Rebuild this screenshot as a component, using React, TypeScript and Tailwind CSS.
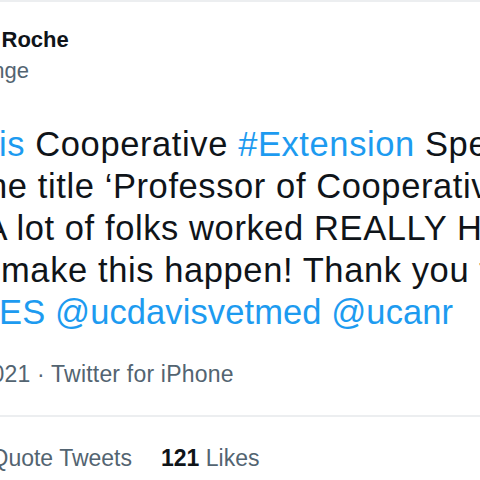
export default function App() {
  const font = "font-['Liberation_Sans','Helvetica_Neue',Arial,sans-serif]";
  const blue = "text-[#1d9bf0]";
  return (
    <div className={`w-[480px] h-[480px] overflow-hidden bg-white border-t-2 border-[#eceef0] ${font}`}>
      <div className="whitespace-nowrap">
        <div className="pt-[23px] text-[22px] leading-[30px] font-bold text-[#0f1419] ml-[1.5px]">Roche</div>
        <div className="mt-[1px] text-[22px] leading-[30px] text-[#536471] ml-[-7.7px]">nge</div>

        <div className="mt-[37px] text-[34.5px] leading-[42px] tracking-[0.6px] text-[#0f1419]">
          <div className="ml-[-1px]">
            <span className={blue}>is</span> Cooperative <span className={blue}>#Extension</span> Specialists
          </div>
          <div className="ml-[-12px]">he title ‘Professor of Cooperative</div>
          <div className="ml-[-15.5px]">A lot of folks worked REALLY HARD</div>
          <div className="ml-[1px]">make this happen! Thank you to</div>
          <div className={`ml-[-24px] tracking-[0.1px] ${blue}`}>AES @ucdavisvetmed @ucanr</div>
        </div>

        <div className="mt-[26px] text-[23px] leading-[30px] tracking-[0.2px] text-[#536471] ml-[-8.5px]">
          021 · Twitter for iPhone
        </div>
      </div>

      <div className="mt-[26px] h-[2px] bg-[#eceef0]" />

      <div className="mt-[26px] flex whitespace-nowrap text-[23px] leading-[30px] text-[#536471] ml-[-9.5px]">
        <span>Quote Tweets</span>
        <span className="ml-[29px]">
          <span className="font-bold text-[#0f1419]">121</span> Likes
        </span>
      </div>
    </div>
  );
}
